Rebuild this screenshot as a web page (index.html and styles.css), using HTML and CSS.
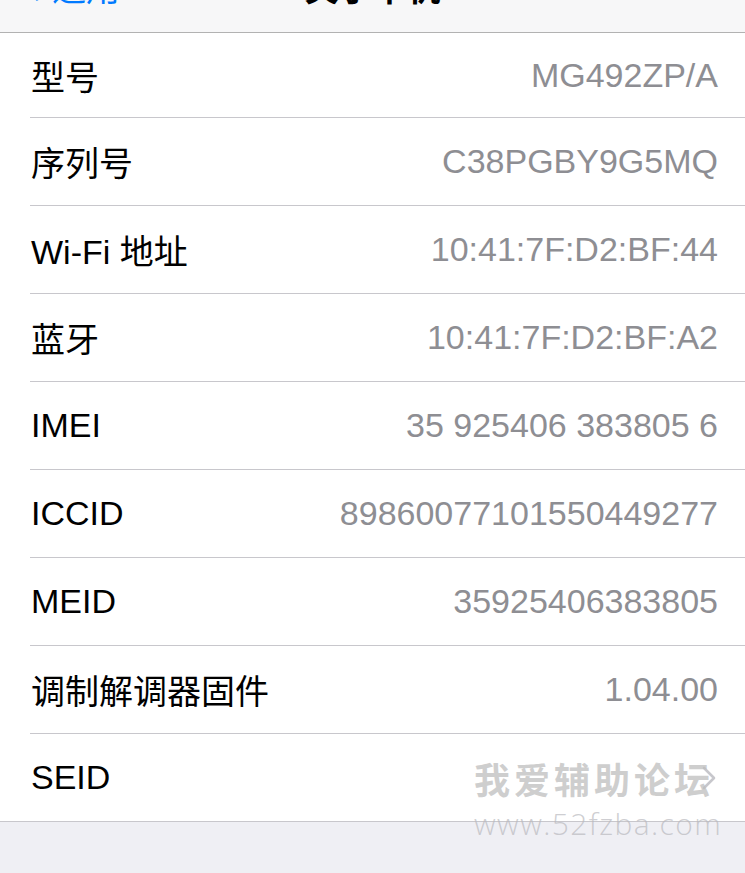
FILE: index.html
```html
<!DOCTYPE html>
<html lang="zh-CN">
<head>
<meta charset="utf-8">
<title>关于本机</title>
<link rel="stylesheet" href="styles.css">
</head>
<body>
<div class="screen">
  <header class="nav">
    <div class="nav-inner">
      <div class="back">
        <svg class="back-chevron" width="16" height="28" viewBox="0 0 16 28"><path d="M13 2 L3 14 L13 26" fill="none" stroke="#007aff" stroke-width="3.4" stroke-linecap="round" stroke-linejoin="round"/></svg>
        <span>通用</span>
      </div>
      <div class="title">关于本机</div>
      <div class="spacer"></div>
    </div>
  </header>
  <main class="list">
    <div class="row first"><span class="label">型号</span><span class="value">MG492ZP/A</span></div>
    <div class="row"><span class="label">序列号</span><span class="value">C38PGBY9G5MQ</span></div>
    <div class="row"><span class="label">Wi-Fi 地址</span><span class="value">10:41:7F:D2:BF:44</span></div>
    <div class="row"><span class="label">蓝牙</span><span class="value">10:41:7F:D2:BF:A2</span></div>
    <div class="row"><span class="label">IMEI</span><span class="value">35 925406 383805 6</span></div>
    <div class="row"><span class="label">ICCID</span><span class="value">89860077101550449277</span></div>
    <div class="row"><span class="label">MEID</span><span class="value">35925406383805</span></div>
    <div class="row"><span class="label">调制解调器固件</span><span class="value">1.04.00</span></div>
    <div class="row last"><span class="label">SEID</span>
      <svg class="chevron" width="14" height="24" viewBox="0 0 14 24"><path d="M2 2 L12 12 L2 22" fill="none" stroke="#c7c7cc" stroke-width="2.6" stroke-linecap="round" stroke-linejoin="round"/></svg>
    </div>
  </main>
  <footer class="footer"></footer>
  <div class="watermark">
    <div class="wm-cn">我爱辅助论坛</div>
    <div class="wm-url">www.52fzba.com</div>
  </div>
</div>
</body>
</html>
```

FILE: styles.css
```css
* { box-sizing: border-box; }
html, body { margin: 0; padding: 0; }
body {
  font-family: "Liberation Sans", "Noto Sans CJK SC", sans-serif;
  background: #efeff4;
  width: 745px;
  height: 873px;
  overflow: hidden;
}
.screen {
  position: relative;
  width: 745px;
  height: 873px;
  display: flex;
  flex-direction: column;
}
.nav {
  height: 33px;
  background: #f7f7f8;
  border-bottom: 1px solid #b2b2b2;
  overflow: hidden;
}
.nav-inner {
  display: grid;
  grid-template-columns: 1fr auto 1fr;
  align-items: center;
  height: 40px;
  margin-top: -38px;
}
.back {
  display: flex;
  align-items: center;
  gap: 12px;
  padding-left: 24px;
  color: #007aff;
  font-size: 34px;
}
.back-chevron { display: block; }
.title {
  font-size: 34px;
  font-weight: bold;
  color: #000;
}
.list {
  background: #fff;
  border-bottom: 1px solid #c8c7cc;
}
.row {
  display: flex;
  align-items: center;
  justify-content: space-between;
  height: 88px;
  margin-left: 30px;
  padding-left: 1px;
  padding-right: 27px;
  border-bottom: 1px solid #c8c7cc;
  font-size: 34px;
}
.row.first { height: 85px; }
.row.last { height: 87px; border-bottom: none; }
.label { color: #000; }
.value { color: #8e8e93; }
.chevron { display: block; margin-right: 2px; }
.footer { flex: 1; background: #efeff4; }
.watermark {
  position: absolute;
  left: 474px;
  top: 756px;
  display: flex;
  flex-direction: column;
  align-items: flex-start;
  gap: 8px;
  pointer-events: none;
}
.wm-cn {
  font-family: "Noto Sans CJK SC", sans-serif;
  font-weight: bold;
  font-size: 36px;
  line-height: 44px;
  letter-spacing: 4px;
  color: rgba(190, 190, 190, 0.75);
}
.wm-url {
  font-family: "Open Sans", "DejaVu Sans", sans-serif;
  font-weight: 300;
  font-size: 30px;
  line-height: 32px;
  letter-spacing: 1.4px;
  color: rgba(185, 185, 190, 0.7);
}
```
